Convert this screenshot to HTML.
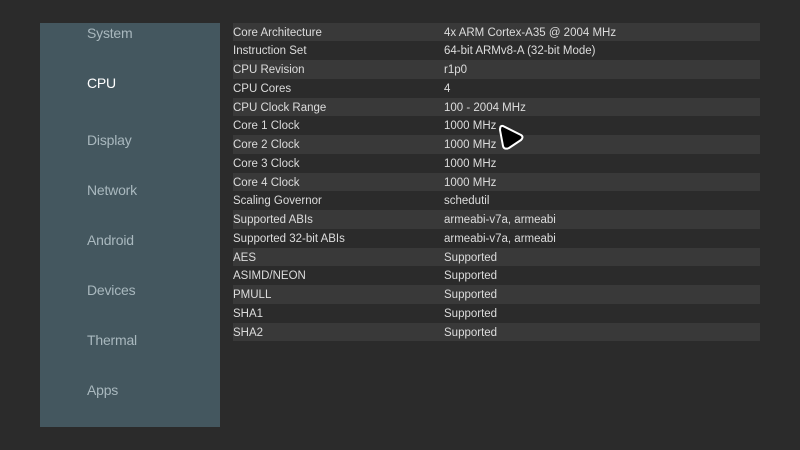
<!DOCTYPE html>
<html><head><meta charset="utf-8"><style>
body{margin:0;width:800px;height:450px;background:#2b2b2b;position:relative;overflow:hidden;font-family:"Liberation Sans",sans-serif}
#side{position:absolute;left:40px;top:23px;width:180px;height:404px;background:#44575f}
.n{position:absolute;left:47px;font-size:14px;color:#a9b8be;line-height:16px;letter-spacing:-0.2px}
.n.s{color:#fff}
#tbl{position:absolute;left:233px;top:22.5px;width:527px}
.r{height:18.75px;line-height:20px;font-size:11.5px;color:#dcdcdc;position:relative}
.r:nth-child(odd){background:#393939}
.r span{position:absolute;left:211px}
</style></head><body>
<div id="side">
<div class="n" style="top:2px">System</div>
<div class="n s" style="top:52px">CPU</div>
<div class="n" style="top:109px">Display</div>
<div class="n" style="top:159px">Network</div>
<div class="n" style="top:209px">Android</div>
<div class="n" style="top:259px">Devices</div>
<div class="n" style="top:309px">Thermal</div>
<div class="n" style="top:359px">Apps</div>
</div>
<div id="tbl">
<div class="r">Core Architecture<span>4x ARM Cortex-A35 @ 2004 MHz</span></div>
<div class="r">Instruction Set<span>64-bit ARMv8-A (32-bit Mode)</span></div>
<div class="r">CPU Revision<span>r1p0</span></div>
<div class="r">CPU Cores<span>4</span></div>
<div class="r">CPU Clock Range<span>100 - 2004 MHz</span></div>
<div class="r">Core 1 Clock<span>1000 MHz</span></div>
<div class="r">Core 2 Clock<span>1000 MHz</span></div>
<div class="r">Core 3 Clock<span>1000 MHz</span></div>
<div class="r">Core 4 Clock<span>1000 MHz</span></div>
<div class="r">Scaling Governor<span>schedutil</span></div>
<div class="r">Supported ABIs<span>armeabi-v7a, armeabi</span></div>
<div class="r">Supported 32-bit ABIs<span>armeabi-v7a, armeabi</span></div>
<div class="r">AES<span>Supported</span></div>
<div class="r">ASIMD/NEON<span>Supported</span></div>
<div class="r">PMULL<span>Supported</span></div>
<div class="r">SHA1<span>Supported</span></div>
<div class="r">SHA2<span>Supported</span></div>
</div>
<svg style="position:absolute;left:0;top:0" width="800" height="450"><path d="M503 126 L521 135 Q524 137 521 140 L509 148 Q504 150 503 146 L500 130 Q500 125 503 126 Z" fill="#000" stroke="#fff" stroke-width="2" stroke-linejoin="round"/></svg>
</body></html>
